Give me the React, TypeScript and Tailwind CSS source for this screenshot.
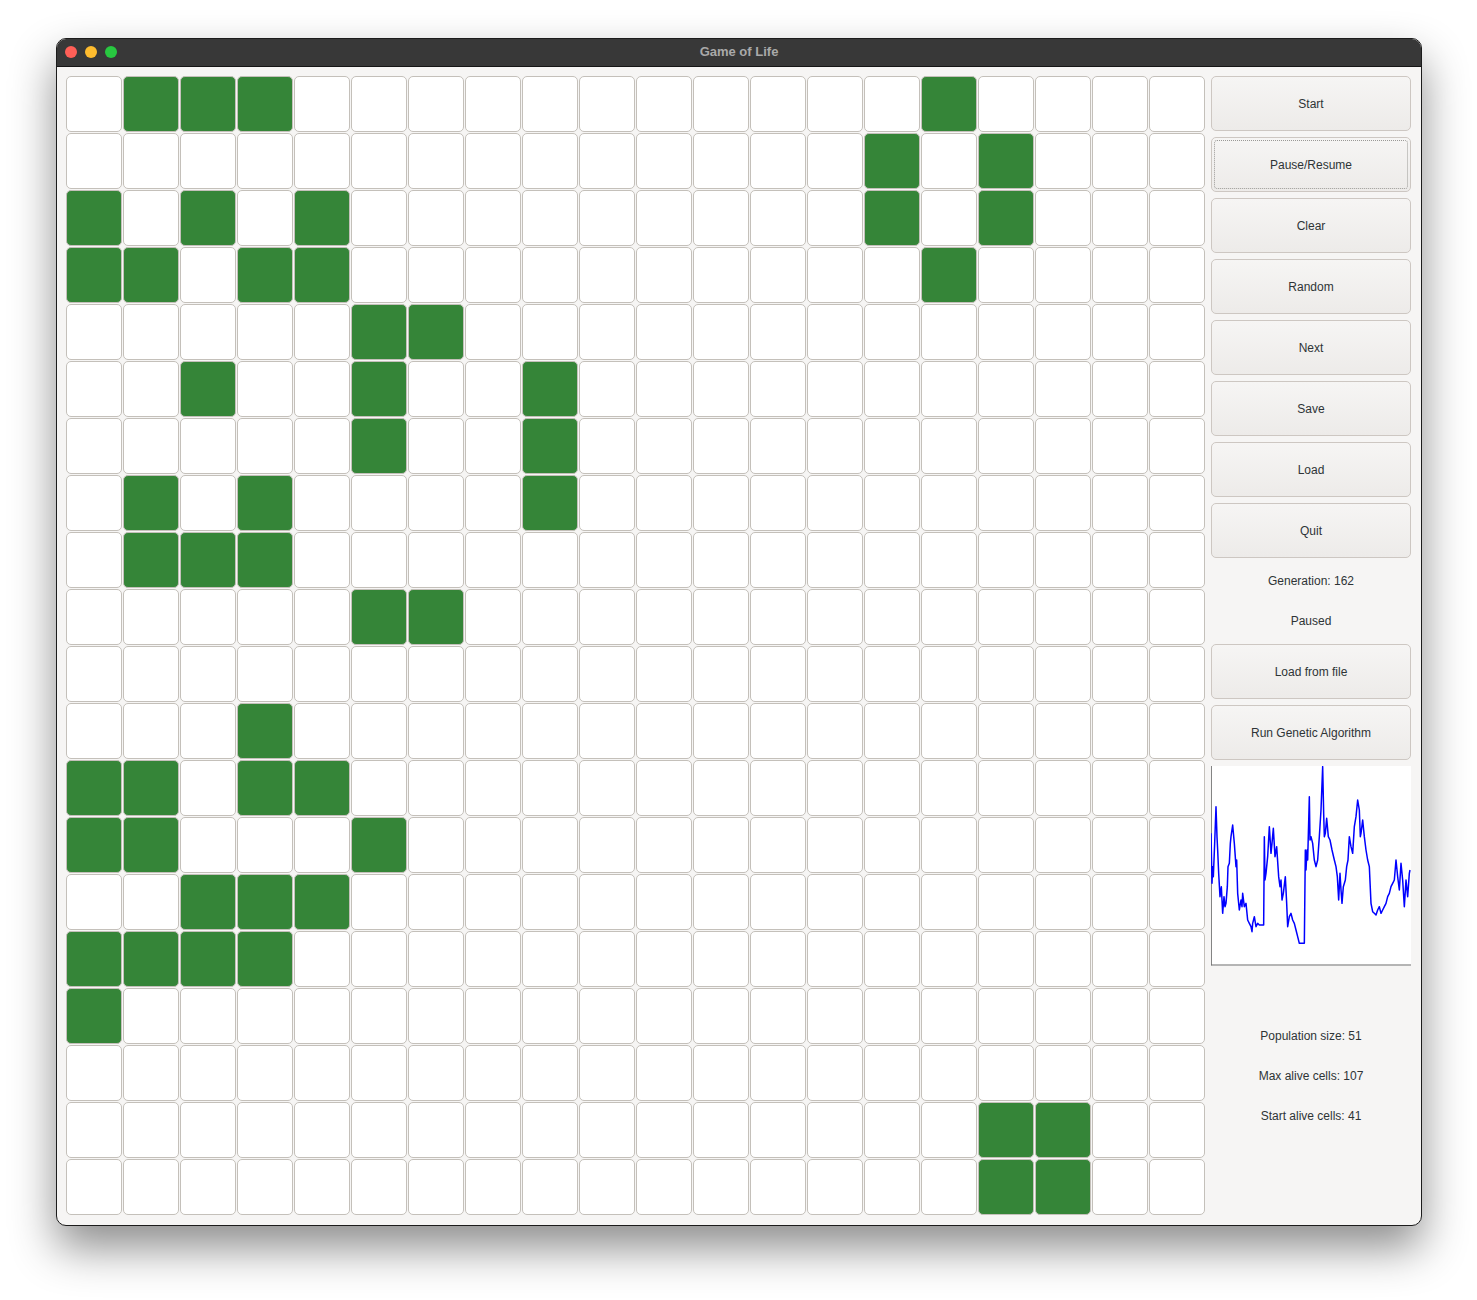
import React from "react";

// alive cells, "row,col"
const ALIVE = new Set<string>([
  "0,1", "0,2", "0,3", "0,15",
  "1,14", "1,16",
  "2,0", "2,2", "2,4", "2,14", "2,16",
  "3,0", "3,1", "3,3", "3,4", "3,15",
  "4,5", "4,6",
  "5,2", "5,5", "5,8",
  "6,5", "6,8",
  "7,1", "7,3", "7,8",
  "8,1", "8,2", "8,3",
  "9,5", "9,6",
  "11,3",
  "12,0", "12,1", "12,3", "12,4",
  "13,0", "13,1", "13,5",
  "14,2", "14,3", "14,4",
  "15,0", "15,1", "15,2", "15,3",
  "16,0",
  "18,16", "18,17",
  "19,16", "19,17",
]);

const SIZE = 20;

// population over generations, traced in chart coords (viewBox 35 18 600 600)
const CURVE: [number, number][] = [
  [35, 220], [38, 370], [40, 320], [42, 350], [46, 250], [50, 140], [53, 230], [55, 270], [58, 340], [62, 410],
  [66, 380], [70, 460], [74, 410], [77, 440], [80, 430], [84, 380], [86, 320], [90, 310], [93, 250], [95, 230], [100, 195],
  [105, 250], [110, 320], [112, 300], [115, 400], [120, 450], [125, 420], [128, 440], [130, 400], [135, 440],
  [140, 430], [145, 480], [150, 490], [155, 500], [158, 515], [160, 490], [165, 470], [170, 500],
  [175, 490], [180, 495], [193, 495], [195, 230], [197, 360], [200, 340], [205, 290], [210, 200],
  [215, 280], [218, 250], [222, 205], [227, 290], [232, 260], [238, 350], [242, 380], [245, 360], [248, 420],
  [252, 400], [258, 350], [262, 430], [265, 500], [270, 470], [275, 460], [280, 480],
  [285, 490], [290, 510], [295, 530], [300, 550], [315, 550], [318, 270], [320, 330], [323, 270], [325, 300],
  [330, 110], [332, 240], [335, 230], [340, 250], [345, 300], [350, 320], [355, 300], [360, 230],
  [365, 150], [370, 20], [373, 160], [375, 230], [378, 220], [382, 175], [387, 230], [392, 240],
  [398, 270], [405, 300], [410, 320], [414, 350], [418, 420], [422, 340], [425, 390], [428, 430],
  [432, 380], [438, 360], [442, 320], [446, 300], [450, 230], [455, 260], [460, 280],
  [465, 200], [470, 170], [475, 120], [480, 150], [483, 230], [485, 220], [490, 180], [495, 230],
  [500, 270], [505, 300], [510, 320], [515, 430], [520, 455], [525, 460], [530, 465],
  [535, 450], [540, 440], [545, 460], [550, 450], [555, 440], [560, 430], [565, 410],
  [570, 400], [575, 380], [580, 370], [585, 360], [590, 300], [595, 350], [600, 390],
  [605, 310], [610, 360], [615, 440], [620, 360], [625, 410], [630, 340], [632, 330],
];

const Button: React.FC<{ label: string; focused?: boolean }> = ({ label, focused }) => (
  <button
    type="button"
    className="relative h-[55px] w-full rounded-[5px] border border-[#cdc7c2] bg-gradient-to-b from-[#f6f5f4] to-[#edebe9] text-[12px] text-[#2e3436]"
  >
    {focused && (
      <span className="absolute inset-[2px] rounded-[3px] border border-dotted border-[#9a9996]" />
    )}
    <span className="relative">{label}</span>
  </button>
);

const Label: React.FC<{ text: string }> = ({ text }) => (
  <div className="flex h-[34px] items-center justify-center text-[12px] text-[#2e3436]">{text}</div>
);

const Chart: React.FC = () => (
  <div className="h-[200px] w-[200px] bg-white">
    <svg viewBox="35 18 600 600" width="200" height="200" preserveAspectRatio="none">
      <line x1="36" y1="18" x2="36" y2="616" stroke="#6b6b6b" strokeWidth="3" />
      <line x1="35" y1="615" x2="635" y2="615" stroke="#6b6b6b" strokeWidth="3" />
      <polyline
        points={CURVE.map(([x, y]) => `${x},${y}`).join(" ")}
        fill="none"
        stroke="#0000ff"
        strokeWidth="4.5"
        strokeLinejoin="round"
      />
    </svg>
  </div>
);

export default function App() {
  const cells = [];
  for (let r = 0; r < SIZE; r++) {
    for (let c = 0; c < SIZE; c++) {
      const alive = ALIVE.has(`${r},${c}`);
      cells.push(
        <div
          key={`${r}-${c}`}
          className={`h-[56px] w-[56px] rounded-[5px] border border-[#c4c0ba] ${alive ? "bg-[#358538]" : "bg-white"}`}
        />
      );
    }
  }

  return (
    <div className="min-h-[1300px] bg-white pl-[56px] pt-[38px] font-['Liberation_Sans',Arial,sans-serif]">
      {/* window */}
      <div className="w-[1366px] overflow-hidden rounded-[10px] border border-[#1c1c1c] bg-[#f6f5f4] shadow-[0_22px_45px_rgba(0,0,0,0.45)]">
        {/* title bar */}
        <div className="relative flex h-[28px] items-center justify-center border-b border-[#151515] bg-[#383838] pb-[2px]">
          <div className="absolute left-[8px] top-[7px] flex gap-[8px]">
            <span className="h-[12px] w-[12px] rounded-full bg-[#ff5f57]" />
            <span className="h-[12px] w-[12px] rounded-full bg-[#febc2e]" />
            <span className="h-[12px] w-[12px] rounded-full bg-[#28c840]" />
          </div>
          <span className="text-[13px] font-bold text-[#a9a9a9]">Game of Life</span>
        </div>

        {/* content */}
        <div className="flex gap-[6px] px-[9px] pb-[10px] pt-[9px]">
          <div className="grid grid-cols-[repeat(20,56px)] gap-px">{cells}</div>

          <div className="flex w-[200px] flex-col gap-[6px]">
            <Button label="Start" />
            <Button label="Pause/Resume" focused />
            <Button label="Clear" />
            <Button label="Random" />
            <Button label="Next" />
            <Button label="Save" />
            <Button label="Load" />
            <Button label="Quit" />
            <Label text="Generation: 162" />
            <Label text="Paused" />
            <Button label="Load from file" />
            <Button label="Run Genetic Algorithm" />
            <Chart />
            <div className="mt-[47px] flex flex-col gap-[6px]">
              <Label text="Population size: 51" />
              <Label text="Max alive cells: 107" />
              <Label text="Start alive cells: 41" />
            </div>
          </div>
        </div>
      </div>
    </div>
  );
}
